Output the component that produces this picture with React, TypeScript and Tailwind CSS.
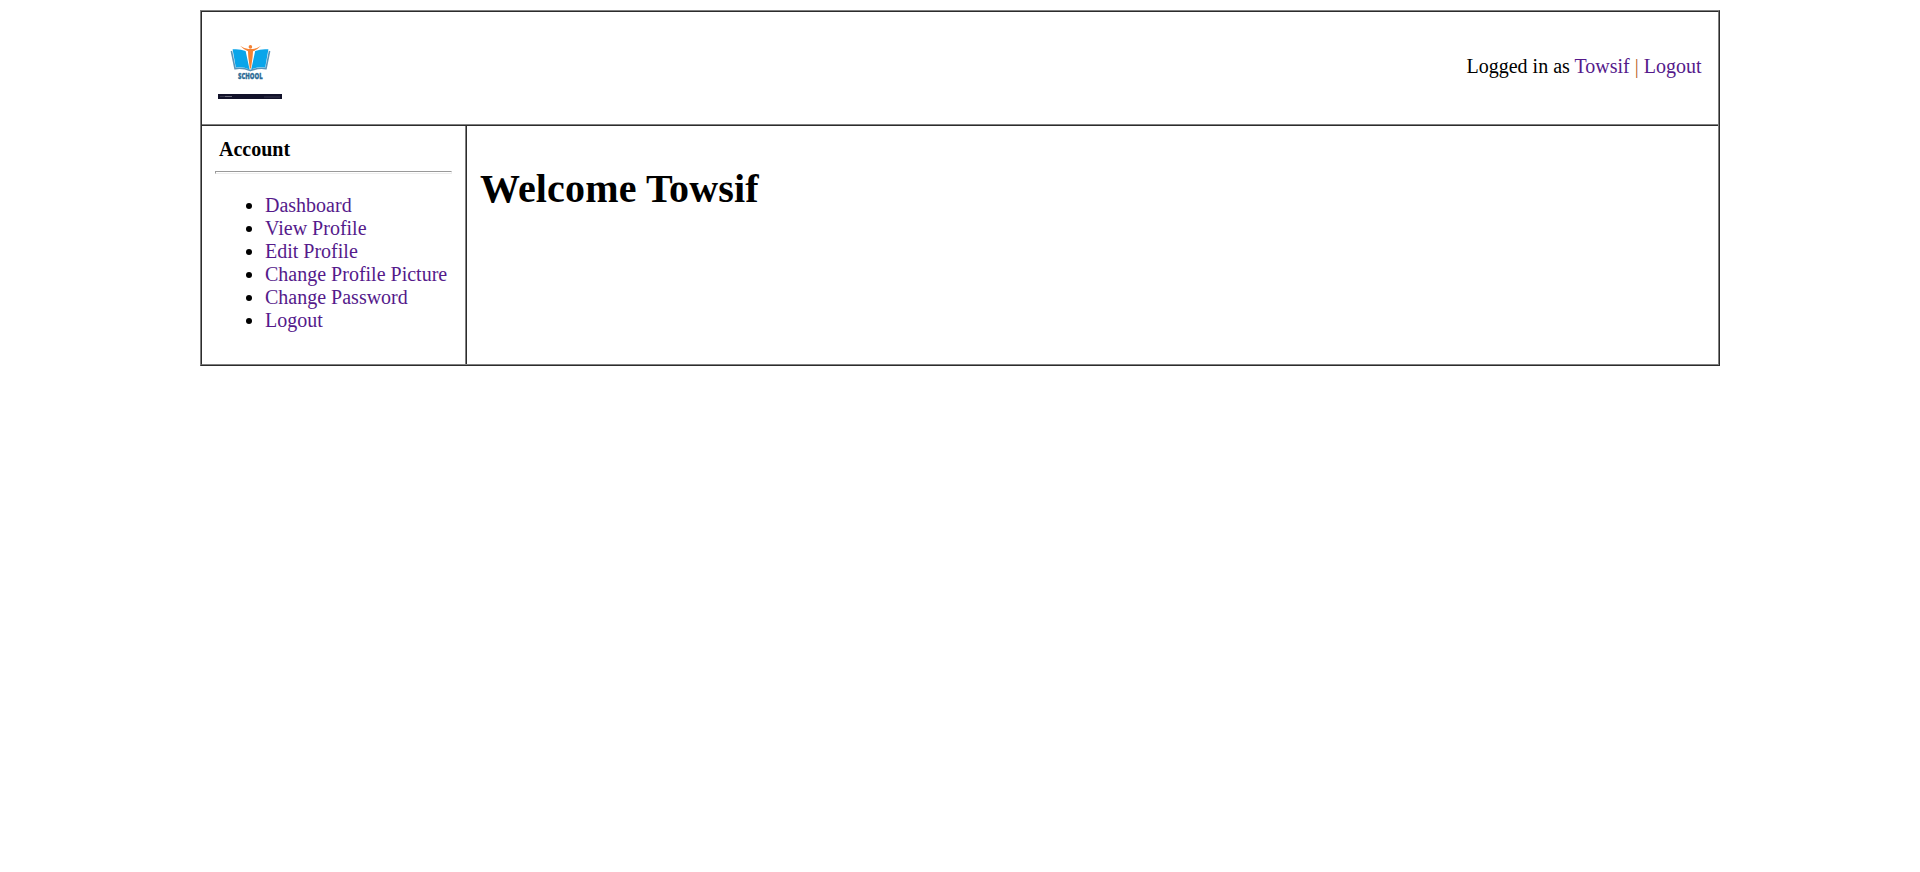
const menu = [
  "Dashboard",
  "View Profile",
  "Edit Profile",
  "Change Profile Picture",
  "Change Password",
  "Logout",
];

function Logo() {
  return (
    <svg className="block h-16 w-16" viewBox="0 0 64 64" aria-label="School logo">
      <path d="M13.4 12 L17 29.6 Q25 28.4 32.3 31.6 Q40 28.4 48 29.6 L51.6 12" fill="none" stroke="#5b93b8" strokeWidth="1.6" />
      <path d="M14.6 10.3 Q22 9.6 27.6 12 L31.6 30.4 Q25 27.4 17.8 28.4Z" fill="#0aa5ea" />
      <path d="M50.4 10.3 Q43 9.6 37.2 12 L33.2 30.4 Q40 27.4 47.2 28.4Z" fill="#0aa5ea" />
      <path d="M22 6.8 Q27 10.2 31 9.9 H34 Q38 10.2 43 6.8 Q39 11 35 12.2 L34.6 18 L33 29.5 H31.8 L30.3 18 L30 12.2 Q26 11 22 6.8Z" fill="#f58233" />
      <circle cx="32.4" cy="7.9" r="1.8" fill="#f58233" />
      <text x="20" y="40.2" textLength="24.6" lengthAdjust="spacingAndGlyphs" fontFamily="'Open Sans', sans-serif" fontWeight="800" fontSize="9.2" fill="#2b6a96" stroke="#2b6a96" strokeWidth="0.3">SCHOOL</text>
      <rect x="0" y="55" width="64" height="5" fill="#12122a" />
      <path d="M2 57.5 H7 M46 58 H62" stroke="#3c3c50" strokeWidth="0.9" />
      <path d="M7 57.5 H14" stroke="#6c6c7c" strokeWidth="1" />
    </svg>
  );
}

export default function App() {
  return (
    <div className="flex justify-center bg-white pt-2.5 font-['Liberation_Serif',serif] text-[20px] leading-[23px] text-black">
      <div className="w-[1520px] border border-t-[#808080] border-r-[#2c2c2c] border-b-[#2c2c2c] border-l-[#808080]">
        <div className="border border-t-[#2c2c2c] border-r-[#808080] border-b-[#808080] border-l-[#2c2c2c]">
          <header className="flex h-[114px] items-start justify-between border-b border-[#2c2c2c] pr-[16.5px] pl-4 shadow-[inset_0_-1px_0_#808080]">
            <div className="pt-[27px]">
              <Logo />
            </div>
            <p className="pt-[43px]">
              Logged in as <a href="#" className="text-[#551a8b]">Towsif</a>
              {" "}<span className="text-[#b85f28]">|</span>{" "}
              <a href="#" className="text-[#551a8b]">Logout</a>
            </p>
          </header>
          <div className="flex h-[238px]">
            <aside className="w-[264px] border-r border-[#808080] pt-3 pr-[13px] pl-[13px]">
              <h2 className="pl-1 font-bold">Account</h2>
              <hr className="mt-[10px] h-[3px] border border-t-[#9a9a9a] border-r-[#eeeeee] border-b-[#eeeeee] border-l-[#9a9a9a]" />
              <ul className="mt-5 list-disc pl-[50px]">
                {menu.map((item) => (
                  <li key={item} className="whitespace-nowrap">
                    <a href="#" className="text-[#551a8b]">{item}</a>
                  </li>
                ))}
              </ul>
            </aside>
            <main className="flex-1 border-l border-[#2c2c2c] pt-10 pl-[13px]">
              <h1 className="text-[40px] leading-[46px] font-bold tracking-[0.15px]">Welcome Towsif</h1>
            </main>
          </div>
        </div>
      </div>
    </div>
  );
}
